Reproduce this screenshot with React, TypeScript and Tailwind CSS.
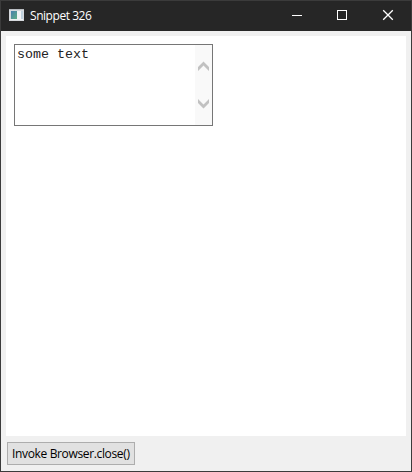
function AppIcon() {
  return (
    <svg width="16" height="14" viewBox="1 1 16 14" className="shrink-0">
      <defs>
        <linearGradient id="screen" x1="0" y1="0" x2="1" y2="1">
          <stop offset="0" stopColor="#4a7fae" />
          <stop offset="1" stopColor="#5fae84" />
        </linearGradient>
      </defs>
      <rect x="1" y="1" width="15" height="12" fill="#d5d8dc" />
      <rect x="1" y="1" width="15" height="1" fill="#b9bdc2" />
      <rect x="3" y="3" width="6" height="8" fill="url(#screen)" />
      <rect x="9" y="3" width="4" height="9" fill="#f1f2f4" />
      <rect x="13" y="3" width="2" height="8" fill="#bfd0dc" />
      <rect x="2" y="11" width="13" height="1" fill="#eef0f1" />
    </svg>
  );
}

function TitleBar() {
  return (
    <header className="flex h-[30px] shrink-0 items-center bg-[#262626] pl-2 text-white">
      <AppIcon />
      <span className="ml-[5px] font-['Open_Sans','Noto_Sans',sans-serif] text-[12px] leading-4 tracking-[-0.45px] whitespace-nowrap">
        Snippet 326
      </span>
      <div className="ml-auto flex h-full text-white">
        <svg width="46" height="30" fill="none" stroke="currentColor" shapeRendering="crispEdges">
          <path d="M18 14.5h10" />
        </svg>
        <svg width="46" height="30" fill="none" stroke="currentColor" shapeRendering="crispEdges">
          <rect x="17.5" y="9.5" width="9" height="9" />
        </svg>
        <svg width="45" height="30" fill="none" stroke="currentColor" strokeWidth="1.3">
          <path d="M17.2 9.2l9.6 9.6M26.8 9.2l-9.6 9.6" />
        </svg>
      </div>
    </header>
  );
}

function TextArea() {
  return (
    <div className="flex h-[82px] w-[199px] border border-[#767676] bg-white">
      <div className="flex-1 pt-[2px] pl-[2px] font-['Liberation_Mono',monospace] text-[13.33px] leading-[15px] text-[#222222]">
        some text
      </div>
      <div className="flex w-[17px] flex-col items-center bg-[#f9f9f9] pt-4">
        <svg width="11" height="10" fill="#c1c1c1">
          <path d="M0 6L5.5 0.5L11 6V10L5.5 4.5L0 10Z" />
        </svg>
        <svg className="mt-7" width="11" height="10" fill="#c1c1c1">
          <path d="M0 0L5.5 5.5L11 0V4L5.5 9.5L0 4Z" />
        </svg>
      </div>
    </div>
  );
}

export default function App() {
  return (
    <div className="flex h-[472px] w-[412px] flex-col border border-[#3b3b3b] bg-[#f0f0f0]">
      <TitleBar />
      <main className="flex flex-1 flex-col items-start px-[5px] pt-[5px]">
        <section className="h-[400px] w-full bg-white p-2">
          <TextArea />
        </section>
        <button className="mt-[6px] ml-px flex h-[23px] w-[128px] items-center border border-[#adadad] bg-[#e1e1e1] pl-1 font-['Open_Sans','Noto_Sans',sans-serif] text-[12px] leading-4 tracking-[-0.35px] whitespace-nowrap text-black">
          Invoke Browser.close()
        </button>
      </main>
    </div>
  );
}
